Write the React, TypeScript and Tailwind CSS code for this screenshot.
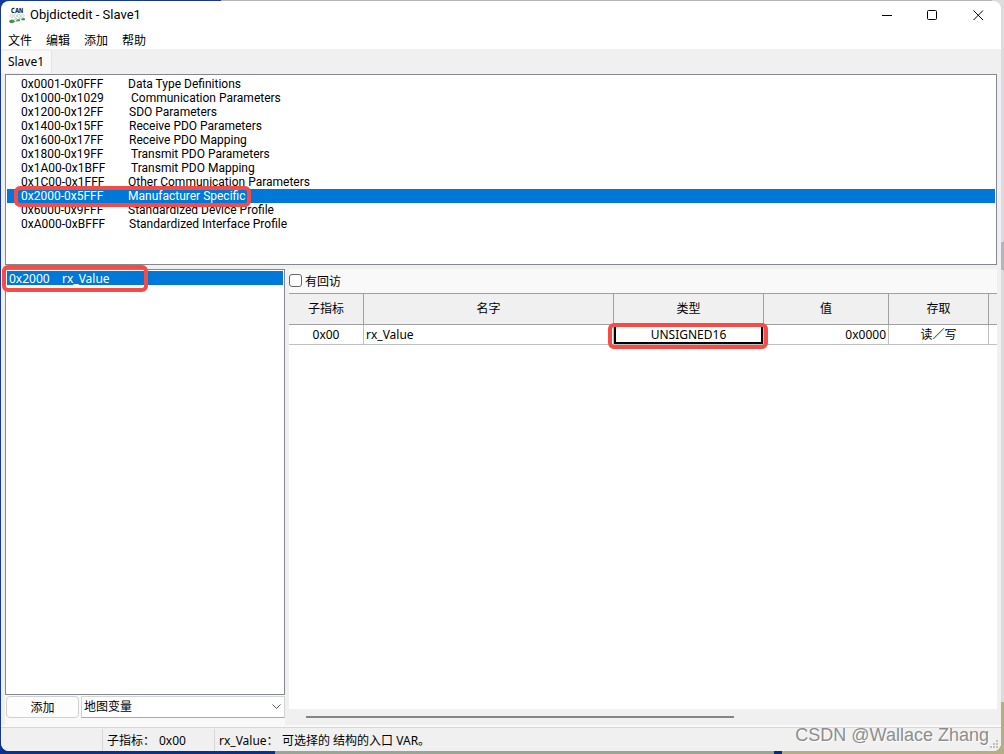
import { clsx } from "clsx";

const menus = ["文件", "编辑", "添加", "帮助"];

const sections = [
  { range: "0x0001-0x0FFF", label: "Data Type Definitions", indent: "pl-0" },
  { range: "0x1000-0x1029", label: "Communication Parameters", indent: "pl-[3px]" },
  { range: "0x1200-0x12FF", label: "SDO Parameters", indent: "pl-px" },
  { range: "0x1400-0x15FF", label: "Receive PDO Parameters", indent: "pl-px" },
  { range: "0x1600-0x17FF", label: "Receive PDO Mapping", indent: "pl-px" },
  { range: "0x1800-0x19FF", label: "Transmit PDO Parameters", indent: "pl-[3px]" },
  { range: "0x1A00-0x1BFF", label: "Transmit PDO Mapping", indent: "pl-[3px]" },
  { range: "0x1C00-0x1FFF", label: "Other Communication Parameters", indent: "pl-0" },
  { range: "0x2000-0x5FFF", label: "Manufacturer Specific", indent: "pl-0" },
  { range: "0x6000-0x9FFF", label: "Standardized Device Profile", indent: "pl-0" },
  { range: "0xA000-0xBFFF", label: "Standardized Interface Profile", indent: "pl-px" },
];

const selectedRange = "0x2000-0x5FFF";

const columns = [
  { title: "子指标", width: "w-[75px]" },
  { title: "名字", width: "w-[250px]" },
  { title: "类型", width: "w-[150px]" },
  { title: "值", width: "w-[125px]" },
  { title: "存取", width: "w-[100px]" },
];

function Marker({ className }: { className: string }) {
  return (
    <span
      aria-hidden
      className={clsx(
        "pointer-events-none absolute z-10 rounded-md border-4 border-[#f94b45]",
        className
      )}
    />
  );
}

function AppIcon() {
  return (
    <svg className="h-[17px] w-4" viewBox="0 0 16 17" fill="none" aria-hidden>
      <text
        x="8"
        y="6"
        textAnchor="middle"
        fill="#111"
        className="font-['DejaVu_Sans_Mono',monospace] text-[7px] font-bold"
      >
        CAN
      </text>
      <g stroke="#c4c8c4" strokeWidth=".8">
        <circle cx="2.500" cy="9" r="1.500" />
        <circle cx="6.200" cy="9" r="1.500" />
        <circle cx="9.900" cy="9" r="1.500" />
        <circle cx="13.600" cy="9" r="1.500" />
      </g>
      <path
        d="M0 14l2-1.500 3 .5 1 1.500-2 1.500H1zM7 13l2-1 2 .5v1.500l-3 .5zM12 12l2-1 2 .5v1.500l-3 .5z"
        fill="#3f9447"
      />
      <path d="M5 12.500l3-1M10 12l2-1M6 15l3-1" stroke="#a9c9ab" />
    </svg>
  );
}

function TitleBar() {
  return (
    <header className="flex h-[28px] shrink-0 items-center pl-2">
      <AppIcon />
      <h1 className="flex-1 pl-[5px] font-['Roboto',sans-serif] text-[13px]">
        Objdictedit - Slave1
      </h1>
      <button aria-label="Minimize" className="flex h-full w-[46px] items-center justify-center">
        <svg className="size-[11px]" viewBox="0 0 11 11" stroke="#000" aria-hidden>
          <path d="M1 5.500h10" />
        </svg>
      </button>
      <button aria-label="Maximize" className="flex h-full w-[46px] items-center justify-center">
        <svg className="size-[11px]" viewBox="0 0 11 11" fill="none" stroke="#000" aria-hidden>
          <rect x=".5" y=".5" width="9" height="9" rx="1" />
        </svg>
      </button>
      <button aria-label="Close" className="flex h-full w-[46px] items-center justify-center">
        <svg className="size-[11px]" viewBox="0 0 11 11" stroke="#000" aria-hidden>
          <path d="M.5.5l9.500 9.500M10 .5L.5 10" />
        </svg>
      </button>
    </header>
  );
}

function SectionList() {
  return (
    <ul className="mx-1 h-[191px] shrink-0 border border-[#828790] bg-white px-px pt-[2px] font-['Roboto',sans-serif]">
      {sections.map((section) => {
        const selected = section.range === selectedRange;

        return (
          <li
            key={section.range}
            className={clsx(
              "relative flex h-[14px] items-center pl-[14px] leading-[14px] whitespace-nowrap",
              selected && "bg-[#0078d7] text-white"
            )}
          >
            <span className="w-[107px]">{section.range}</span>
            <span className={section.indent}>{section.label}</span>
            {selected && <Marker className="-top-[3px] left-[7px] h-[21px] w-[237px]" />}
          </li>
        );
      })}
    </ul>
  );
}

function IndexPanel() {
  return (
    <div className="flex w-[280px] shrink-0 flex-col">
      <ul className="flex-1 border border-[#828790] bg-white p-px">
        <li className="relative flex h-[14px] items-center bg-[#0078d7] pt-px pl-[2px] text-white">
          <span className="w-[53px]">0x2000</span>
          <span>rx_Value</span>
          <Marker className="-top-[6px] -left-[5px] h-[27px] w-[146px]" />
        </li>
      </ul>
      <div className="flex h-[30px] items-start gap-[2px] bg-[#f9f9f9] pt-px pl-px">
        <button className="h-[22px] w-[73px] rounded border border-[#d0d0d0] bg-[#fdfdfd] pt-[2px]">
          添加
        </button>
        <div className="relative min-w-0 flex-1">
          <select
            aria-label="变量类型"
            className="h-[22px] w-full appearance-none border border-[#d4d4d4] border-b-[#a9a9a9] bg-white pl-[2px]"
          >
            <option>地图变量</option>
          </select>
          <svg
            className="pointer-events-none absolute top-[8px] right-[4px] h-[6px] w-[9px]"
            viewBox="0 0 9 6"
            fill="none"
            stroke="#555"
            aria-hidden
          >
            <path d="M.5.5l4 4 4-4" />
          </svg>
        </div>
      </div>
    </div>
  );
}

function ValueTable() {
  return (
    <div className="flex-1 overflow-hidden bg-white">
      <table className="w-full table-fixed border-separate border-spacing-0 text-center">
        <thead>
          <tr className="h-8 bg-[#f0f0f0]">
            {columns.map((column) => (
              <th
                key={column.title}
                scope="col"
                className={clsx(
                  "border-t border-r border-b border-[#a0a0a0] p-0 font-normal",
                  column.width
                )}
              >
                {column.title}
              </th>
            ))}
            <td className="border-t border-b border-[#a0a0a0] p-0" />
          </tr>
        </thead>
        <tbody>
          <tr className="h-5">
            <td className="border-r border-b border-[#c0c0c0] p-0">0x00</td>
            <td className="border-r border-b border-[#c0c0c0] p-0 pl-[2px] text-left">rx_Value</td>
            <td className="relative border-r border-b border-[#c0c0c0] p-0">
              <div className="h-[19px] border-2 border-t-0 border-black leading-[20px]">
                UNSIGNED16
              </div>
              <Marker className="-top-[2px] -left-[6px] h-[26px] w-[160px]" />
            </td>
            <td className="border-r border-b border-[#c0c0c0] p-0 pr-[2px] text-right">0x0000</td>
            <td className="border-r border-b border-[#c0c0c0] p-0">读／写</td>
            <td className="border-b border-[#c0c0c0] p-0" />
          </tr>
        </tbody>
      </table>
    </div>
  );
}

function EntryPanel() {
  return (
    <div className="flex min-w-0 flex-1 flex-col pl-1">
      <label className="flex h-[24px] shrink-0 items-start gap-[3px] bg-[#f9f9f9] pt-[5px]">
        <input
          type="checkbox"
          className="size-[13px] appearance-none rounded-[3px] border border-[#666] bg-white"
        />
        有回访
      </label>
      <ValueTable />
      <div className="flex h-[16px] shrink-0 items-center bg-[#f0f0f0] pl-[17px]">
        <div className="h-[2px] w-[62%] bg-[#858585]" />
      </div>
    </div>
  );
}

function StatusBar() {
  return (
    <footer className="relative flex h-[24px] shrink-0 items-stretch border-t border-[#d7d7d7] bg-[#f0f0f0] pt-px leading-[23px] whitespace-nowrap">
      <div className="w-[102px] border-r border-[#d7d7d7]" />
      <div className="flex w-[112px] border-r border-[#d7d7d7] pl-1">
        <span className="w-[52px]">子指标：</span>
        <span>0x00</span>
      </div>
      <div className="flex flex-1 pl-1">
        <span className="w-[63px]">rx_Value：</span>
        <span>可选择的 结构的入口 VAR。</span>
      </div>
      <svg
        className="absolute right-[2px] bottom-[2px] size-[9px]"
        viewBox="0 0 9 9"
        fill="#bfbfbf"
        aria-hidden
      >
        <path d="M6 0h2v2H6zM3 3h2v2H3zM6 3h2v2H6zM0 6h2v2H0zM3 6h2v2H3zM6 6h2v2H6z" />
      </svg>
    </footer>
  );
}

export default function App() {
  return (
    <div className="relative h-screen bg-[linear-gradient(90deg,#16389a_0,#16389a_22%,#b4b4b4_22%)] pt-px pr-[3px] pb-[3px] pl-px font-['Noto_Sans','Noto_Sans_CJK_SC',sans-serif] text-xs text-black">
      <div aria-hidden className="absolute inset-y-0 right-0 flex w-[12px] flex-col bg-[#dcdcdc]">
        <div className="mt-[242px] h-[28px] bg-[#b5b5b5]" />
        <div className="mt-auto h-[52px] bg-[#b5ad86]" />
      </div>
      <div aria-hidden className="absolute bottom-0 left-0 flex h-[12px] w-full">
        <div className="w-[275px] bg-[#0b3188]" />
        <div className="flex-1 bg-[#9aa596]" />
        <div className="w-[8px] bg-[#0b2a7a]" />
        <div className="w-[222px] bg-[#b5ad86]" />
      </div>
      <div className="relative flex h-full flex-col overflow-hidden rounded-lg bg-white">
        <TitleBar />
        <nav className="flex h-[20px] shrink-0 items-center gap-[14px] pt-1 pl-[7px]">
          {menus.map((menu) => (
            <button key={menu}>{menu}</button>
          ))}
        </nav>
        <main className="flex min-h-0 flex-1 flex-col bg-[#f0f0f0]">
          <div className="flex h-[25px] shrink-0 items-start pt-[2px]">
            <button className="h-[22px] w-[51px] border-r border-[#e2e2e2] bg-[#f9f9f9]">
              Slave1
            </button>
          </div>
          <SectionList />
          <div className="mx-1 mt-1 flex min-h-0 flex-1">
            <IndexPanel />
            <EntryPanel />
          </div>
          <div className="h-[2px] shrink-0 bg-[#f9f9f9]" />
        </main>
        <StatusBar />
      </div>
      <p className="pointer-events-none absolute right-[15px] bottom-[5px] font-['Liberation_Sans',sans-serif] text-lg text-[#8d8d8d] [text-shadow:1px_1px_0_#fff]">
        CSDN @Wallace Zhang
      </p>
    </div>
  );
}
